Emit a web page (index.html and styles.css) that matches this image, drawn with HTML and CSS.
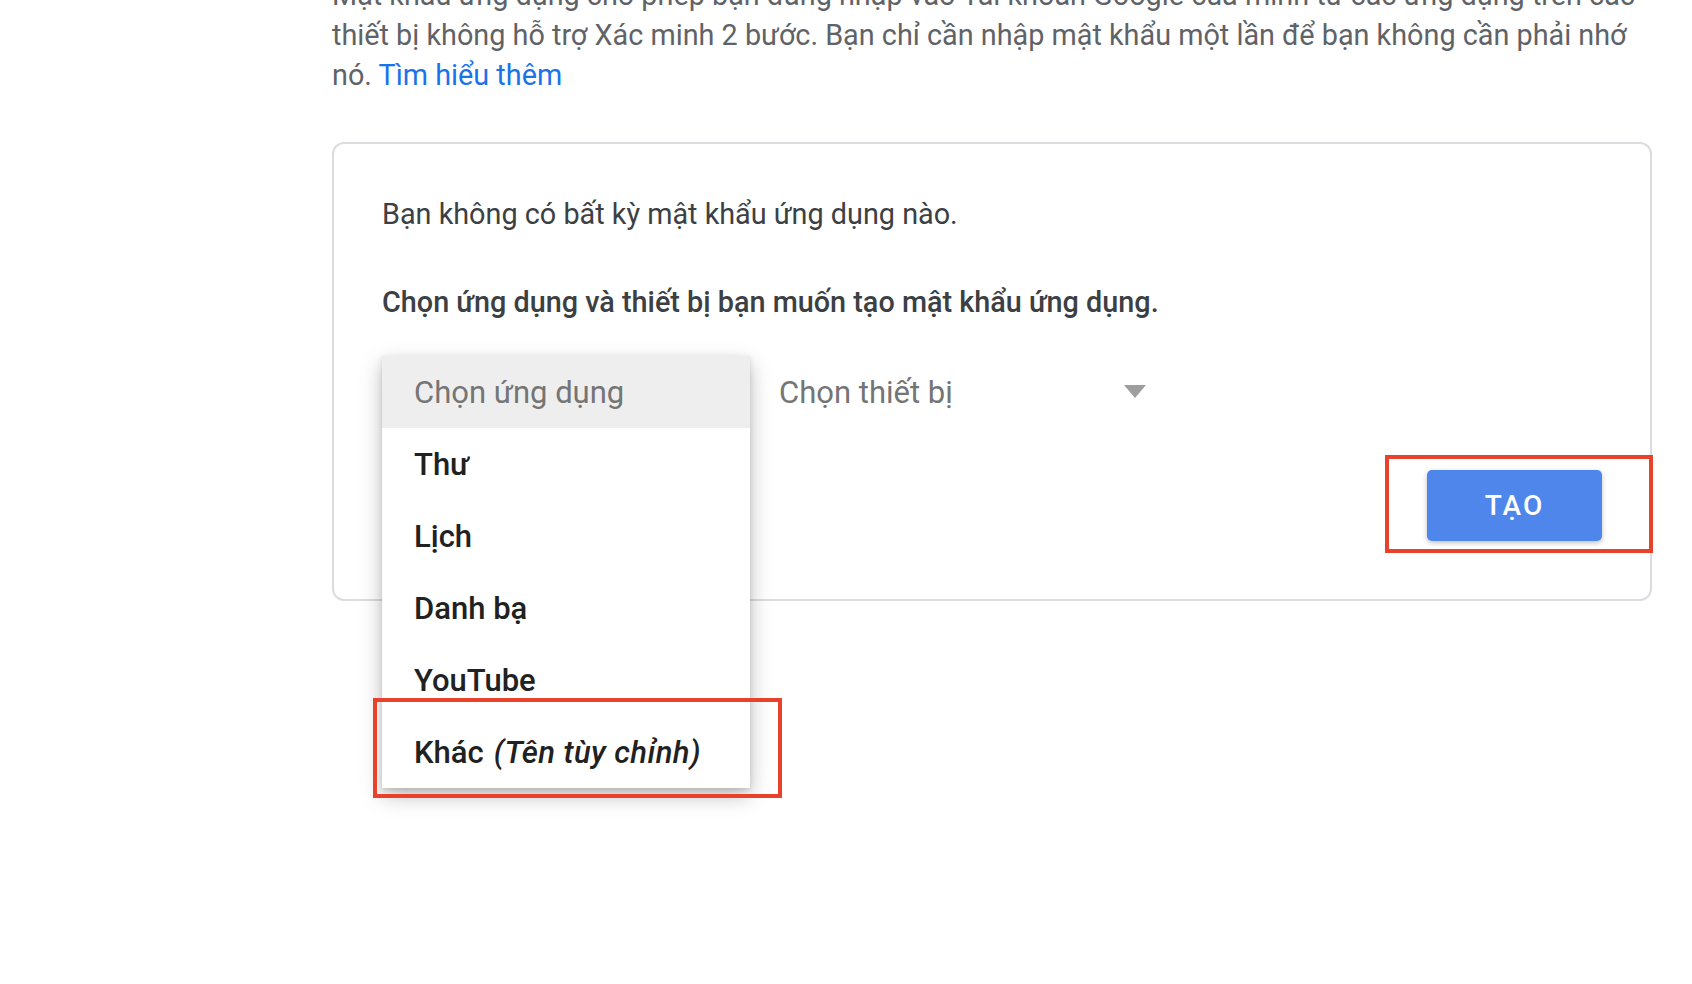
FILE: index.html
```html
<!DOCTYPE html>
<html lang="vi">
<head>
  <meta charset="UTF-8">
  <title>Mật khẩu ứng dụng</title>
  <link rel="stylesheet" href="styles.css">
</head>
<body>
  <div class="page">
    <!-- Đoạn mô tả -->
    <p class="intro">
      Mật khẩu ứng dụng cho phép bạn đăng nhập vào Tài khoản Google của mình từ các ứng dụng trên các thiết bị không hỗ trợ Xác minh 2 bước. Bạn chỉ cần nhập mật khẩu một lần để bạn không cần phải nhớ nó. <a href="#" class="link">Tìm hiểu thêm</a>
    </p>

    <!-- Thẻ tạo mật khẩu -->
    <section class="card">
      <p class="empty">Bạn không có bất kỳ mật khẩu ứng dụng nào.</p>
      <p class="prompt">Chọn ứng dụng và thiết bị bạn muốn tạo mật khẩu ứng dụng.</p>

      <div class="selects">
        <div class="select select-app">
          <span class="select-label">Chọn ứng dụng</span>
          <ul class="menu">
            <li class="menu-item placeholder">Chọn ứng dụng</li>
            <li class="menu-item">Thư</li>
            <li class="menu-item">Lịch</li>
            <li class="menu-item">Danh bạ</li>
            <li class="menu-item">YouTube</li>
            <li class="menu-item custom">Khác <em>(Tên tùy chỉnh)</em><span class="mark mark-menu"></span></li>
          </ul>
        </div>
        <div class="select select-device">
          <span class="select-label">Chọn thiết bị</span>
          <span class="arrow"></span>
        </div>
      </div>

      <div class="actions">
        <div class="btn-wrap">
          <button class="btn">TẠO</button>
          <span class="mark mark-btn"></span>
        </div>
      </div>
    </section>
  </div>
</body>
</html>
```

FILE: styles.css
```css
/* Базовые сбросы */
* {
  margin: 0;
  padding: 0;
  box-sizing: border-box;
}

html, body {
  height: 100%;
  overflow: hidden;
}

body {
  font-family: Roboto, 'Liberation Sans', sans-serif;
  background: #fff;
  color: #5f6368;
}

.page {
  width: 1320px;
  margin-left: 332px;
}

.intro {
  margin-top: -25px;
  font-size: 28.8px;
  line-height: 40px;
  color: #5f6368;
}

.link {
  color: #1a73e8;
  text-decoration: none;
}

/* Карточка */
.card {
  margin-top: 47px;
  border: 2px solid #dadce0;
  border-radius: 12px;
  padding: 52px 48px 58px;
}

.empty {
  font-size: 28.8px;
  line-height: 36px;
  color: #3c4043;
}

.prompt {
  margin-top: 52px;
  font-size: 28.8px;
  line-height: 36px;
  font-weight: 500;
  color: #3c4043;
}

/* Выпадающие списки */
.selects {
  display: flex;
  margin-top: 36px;
}

.select {
  position: relative;
  height: 72px;
  display: flex;
  align-items: center;
  font-size: 31px;
  color: #757575;
}

.select-app {
  width: 368px;
  padding-left: 32px;
}

.select-device {
  width: 412px;
  padding-left: 29px;
}

.arrow {
  position: absolute;
  right: 16px;
  top: 29px;
  width: 0;
  height: 0;
  border-left: 11.5px solid transparent;
  border-right: 11.5px solid transparent;
  border-top: 13px solid #9e9e9e;
}

.menu {
  position: absolute;
  top: 0;
  left: 0;
  width: 368px;
  list-style: none;
  background: #fff;
  box-shadow: 0 8px 20px rgba(0, 0, 0, 0.26), 0 2px 5px rgba(0, 0, 0, 0.12);
  z-index: 10;
}

.menu-item {
  position: relative;
  height: 72px;
  display: flex;
  align-items: center;
  padding-left: 32px;
  font-size: 31px;
  font-weight: 500;
  color: #212121;
}

.menu-item em {
  font-style: italic;
  margin-left: 10px;
  letter-spacing: 0.4px;
}

.menu-item.placeholder {
  background: #eeeeee;
  font-weight: 400;
  color: #757575;
}

/* Кнопка */
.actions {
  display: flex;
  justify-content: flex-end;
  margin-top: 42px;
}

.btn-wrap {
  position: relative;
}

.btn {
  display: block;
  width: 175px;
  height: 71px;
  border: none;
  border-radius: 5px;
  background: #4f86ec;
  color: #fff;
  font-family: Roboto, 'Liberation Sans', sans-serif;
  font-size: 28px;
  font-weight: 500;
  letter-spacing: 2px;
  box-shadow: 0 2px 5px rgba(0, 0, 0, 0.25);
}

/* Красные рамки-пометки */
.mark {
  position: absolute;
  border: 4px solid #e8412c;
  pointer-events: none;
}

.mark-btn {
  left: -42px;
  top: -15px;
  right: -51px;
  bottom: -12px;
}

.mark-menu {
  left: -9px;
  top: -18px;
  right: -32px;
  bottom: -10px;
}
```
